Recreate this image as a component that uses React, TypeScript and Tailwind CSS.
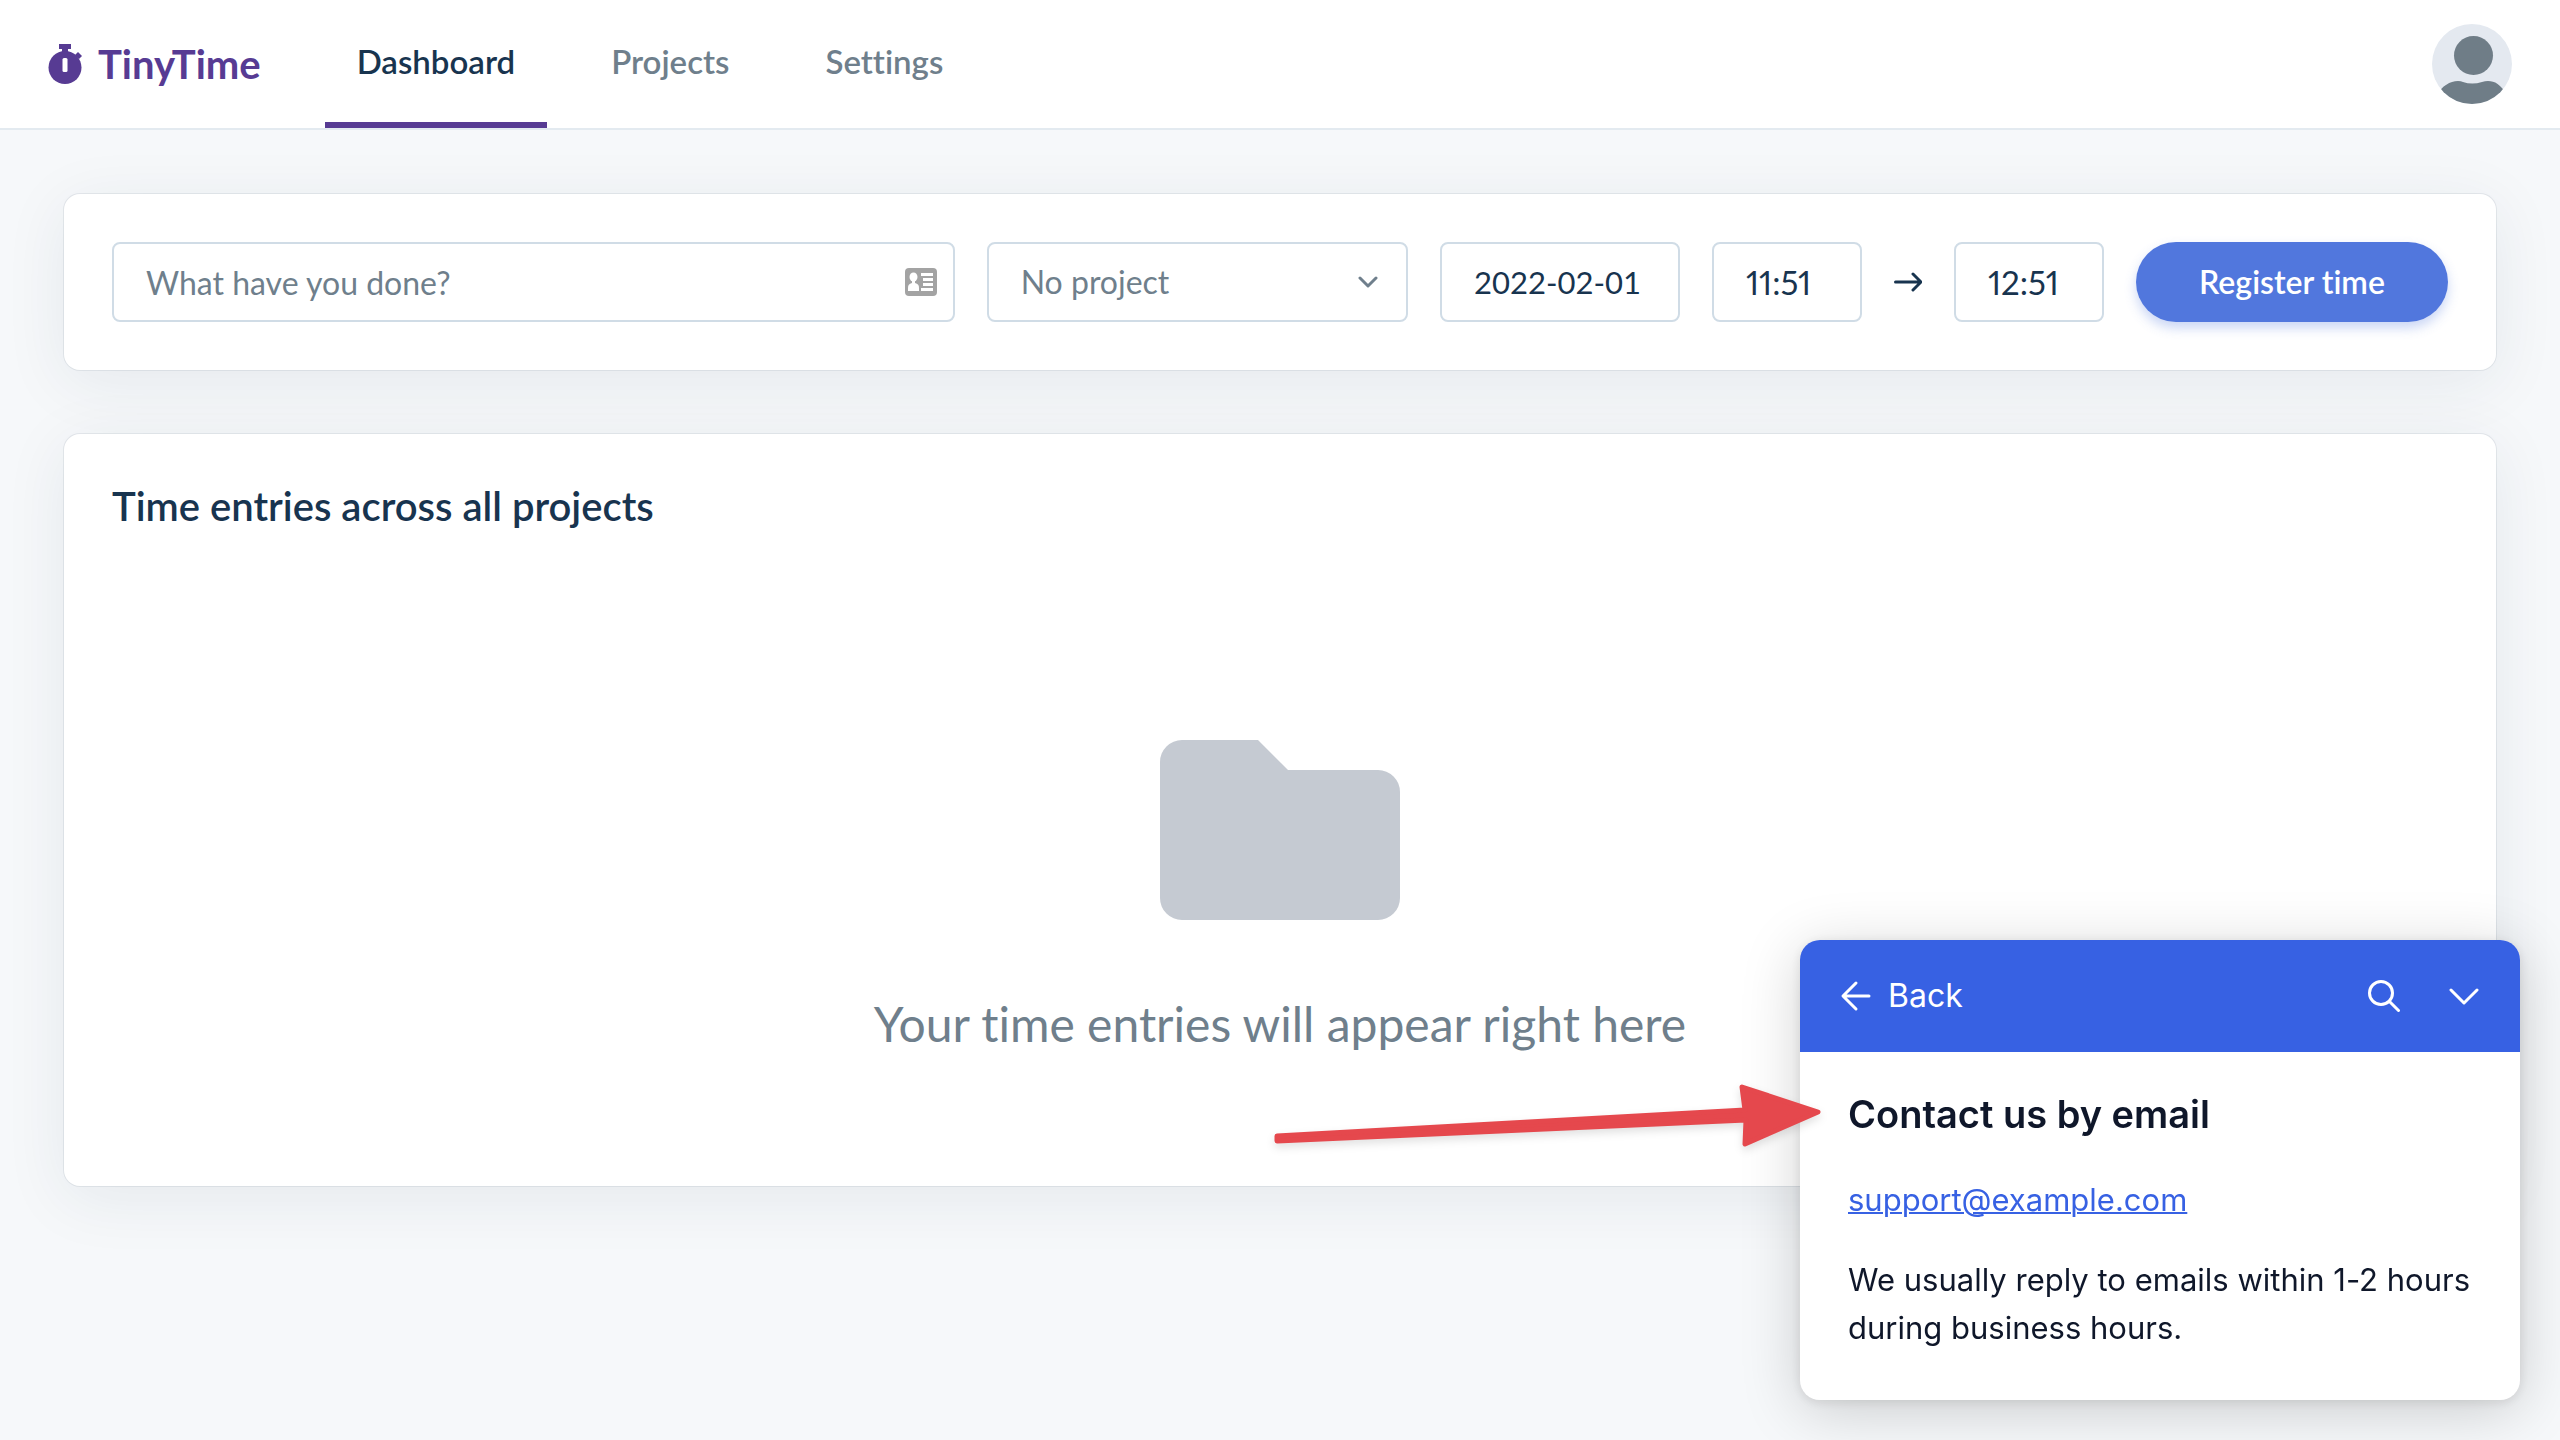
import { FC, useState } from "react";

const links = ["Dashboard", "Projects", "Settings"];

const field = "h-20 rounded-lg border-2 border-[#d0dce6] bg-white px-8 outline-none";

const card =
  "rounded-2xl bg-white p-12 shadow-[0_0_0_1px_rgba(24,52,79,0.08),0_12px_64px_rgba(24,52,79,0.08)]";

const Header: FC = () => {
  const [active, setActive] = useState("Dashboard");

  return (
    <header className="flex h-[130px] items-center justify-between border-b-2 border-[#e3eaf0] bg-white px-12">
      <div className="flex h-full items-center">
        <a href="#" className="mr-16 flex items-center gap-4 text-[#573b93]">
          <svg viewBox="0 0 34 40" className="h-10 w-[34px]" fill="currentColor">
            <path d="M11 0h12v5h-3v4h-6V5h-3z" />
            <path d="M27 11l3-3 4 4-3 3z" />
            <circle cx="17" cy="23.5" r="16.5" />
            <rect x="14.5" y="14" width="5" height="14" rx="1.5" fill="#fff" />
          </svg>
          <span className="text-[40px] leading-[48px] font-bold">TinyTime</span>
        </a>
        <nav className="flex h-full gap-8">
          {links.map((link) => (
            <a
              key={link}
              href="#"
              onClick={() => setActive(link)}
              className={`flex items-center border-b-[6px] px-8 pt-0.5 text-[33px] font-semibold ${
                active === link
                  ? "border-[#573b93] text-[#18344f]"
                  : "border-transparent text-[#6f7f8c]"
              }`}
            >
              {link}
            </a>
          ))}
        </nav>
      </div>
      <button aria-label="Account" className="size-20 cursor-pointer overflow-hidden rounded-full">
        <svg viewBox="0 0 80 80" className="size-20">
          <rect width="80" height="80" fill="#e4e9f0" />
          <circle cx="41.5" cy="31.5" r="19.5" fill="#6f7d87" />
          <path
            d="M5 71C10 62 18 57 26 57Q29 57 31 58Q40 61 50 58Q53 57 56 57C63 57 68 60 76 72V80H5z"
            fill="#6f7d87"
          />
        </svg>
      </button>
    </header>
  );
};

const TimeForm: FC = () => {
  const [text, setText] = useState("");
  const [date, setDate] = useState("2022-02-01");
  const [from, setFrom] = useState("11:51");
  const [to, setTo] = useState("12:51");

  return (
    <form
      onSubmit={(e) => e.preventDefault()}
      className={`flex items-center gap-8 text-[#18344f] ${card}`}
    >
      <div className="relative min-w-0 flex-2">
        <input
          aria-label="What have you done?"
          className={`w-full text-[32px] placeholder:text-[#6f7f8c] placeholder:opacity-100 ${field}`}
          placeholder="What have you done?"
          value={text}
          onChange={(e) => setText(e.target.value)}
        />
        <svg viewBox="0 0 32 28" className="absolute top-[26px] right-[18px] h-7 w-8">
          <rect width="32" height="28" rx="4" fill="#a3a3a3" />
          <g fill="#fff">
            <ellipse cx="8.5" cy="9" rx="4" ry="4.5" />
            <path d="M7 12h3v3c3 1 4 2 4 5v3H3v-3c0-3 1-4 4-5z" />
            <path d="M16 5h12v3H16zM18 10h10v3H18zM18 15h10v3H18zM16 20h12v3H16z" />
          </g>
        </svg>
      </div>
      <div className="relative min-w-0 flex-1">
        <select
          aria-label="Project"
          className={`w-full appearance-none text-[32px] text-[#6f7f8c] ${field}`}
        >
          <option>No project</option>
        </select>
        <svg
          viewBox="0 0 20 12"
          className="pointer-events-none absolute top-[34px] right-[30px] h-3 w-5"
          fill="none"
          stroke="#6f7f8c"
          strokeWidth="3"
          strokeLinecap="round"
          strokeLinejoin="round"
        >
          <path d="M2 2l8 8 8-8" />
        </svg>
      </div>
      <input
        aria-label="Date"
        className={`w-60 text-[31px] ${field}`}
        value={date}
        onChange={(e) => setDate(e.target.value)}
      />
      <input
        aria-label="From"
        className={`w-[150px] text-[33px] proportional-nums ${field}`}
        value={from}
        onChange={(e) => setFrom(e.target.value)}
      />
      <svg
        viewBox="0 0 28 20"
        className="h-5 w-7 shrink-0"
        fill="none"
        stroke="currentColor"
        strokeWidth="3"
        strokeLinecap="round"
        strokeLinejoin="round"
      >
        <path d="M1.5 10h25M19 2l8 8-8 8" />
      </svg>
      <input
        aria-label="To"
        className={`w-[150px] text-[33px] proportional-nums ${field}`}
        value={to}
        onChange={(e) => setTo(e.target.value)}
      />
      <button className="h-20 w-[312px] cursor-pointer rounded-full bg-[#5177dd] text-[32px] font-semibold text-white shadow-[0_6px_12px_rgba(81,119,221,0.3)]">
        Register time
      </button>
    </form>
  );
};

const Entries: FC = () => (
  <section className={card}>
    <h1 className="text-[40px] leading-[48px] font-semibold text-[#18344f]">
      Time entries across all projects
    </h1>
    <div className="flex flex-col items-center gap-17 pt-[210px] pb-[78px]">
      <svg viewBox="0 0 240 180" className="h-[180px] w-60" fill="#c5cad2">
        <path d="M22 0H98L128 30H218A22 22 0 0 1 240 52V158A22 22 0 0 1 218 180H22A22 22 0 0 1 0 158V22A22 22 0 0 1 22 0z" />
      </svg>
      <p className="text-[48px] leading-[72px] text-[#6f7f8c]">
        Your time entries will appear right here
      </p>
    </div>
  </section>
);

const Beacon: FC = () => (
  <aside className="fixed right-10 bottom-10 w-[720px] rounded-[20px] bg-white font-['Inter',sans-serif] text-[31px] leading-[48px] text-[#0f172a] shadow-[0_10px_60px_rgba(0,0,0,0.18),0_2px_12px_rgba(0,0,0,0.1)]">
    <div className="flex h-28 items-center justify-between rounded-t-[20px] bg-[#3761e3] px-10 text-white">
      <button className="flex cursor-pointer items-center gap-4 text-[32px]">
        <svg
          viewBox="0 0 32 32"
          className="size-8"
          fill="none"
          stroke="currentColor"
          strokeWidth="3"
          strokeLinecap="round"
          strokeLinejoin="round"
        >
          <path d="M29 16H4M16 3L3 16l13 13" />
        </svg>
        Back
      </button>
      <div className="flex gap-12">
        <button aria-label="Search" className="cursor-pointer">
          <svg
            viewBox="0 0 32 32"
            className="size-8"
            fill="none"
            stroke="currentColor"
            strokeWidth="3"
            strokeLinecap="round"
          >
            <circle cx="13" cy="13" r="11.5" />
            <path d="M21.5 21.5l9 9" />
          </svg>
        </button>
        <button aria-label="Minimize" className="cursor-pointer">
          <svg
            viewBox="0 0 32 32"
            className="size-8"
            fill="none"
            stroke="currentColor"
            strokeWidth="3"
            strokeLinecap="round"
            strokeLinejoin="round"
          >
            <path d="M3 10l13 13 13-13" />
          </svg>
        </button>
      </div>
    </div>
    <div className="px-12 pt-[38px] pb-12">
      <h2 className="mb-[38px] text-[38px] font-semibold">Contact us by email</h2>
      <p className="mb-8">
        <a
          href="mailto:support@example.com"
          className="text-[#3761e3] underline decoration-2"
        >
          support@example.com
        </a>
      </p>
      <p>We usually reply to emails within 1-2 hours during business hours.</p>
    </div>
    {/* callout arrow pointing at the heading */}
    <svg
      viewBox="0 0 560 80"
      className="pointer-events-none absolute top-[136px] -left-[530px] h-20 w-[560px] overflow-visible drop-shadow-[0_4px_4px_rgba(0,0,0,0.12)]"
      fill="#e5484d"
      stroke="#e5484d"
      strokeWidth="5"
      strokeLinejoin="round"
    >
      <path d="M7 60L475 34L472 11L548 36L475 68L476 44L7 65z" />
    </svg>
  </aside>
);

const App: FC = () => {
  return (
    <div className="min-h-screen bg-[#f6f8fa] font-['Lato',sans-serif] [font-variant-ligatures:none]">
      <Header />
      <main className="flex flex-col gap-16 p-16">
        <TimeForm />
        <Entries />
      </main>
      <Beacon />
    </div>
  );
};

export default App;
